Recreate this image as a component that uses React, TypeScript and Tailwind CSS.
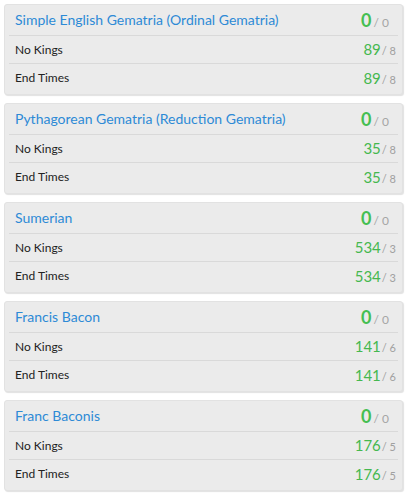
const ciphers = [
  { name: "Simple English Gematria (Ordinal Gematria)", rows: [["No Kings", 89, 8], ["End Times", 89, 8]] },
  { name: "Pythagorean Gematria (Reduction Gematria)", rows: [["No Kings", 35, 8], ["End Times", 35, 8]] },
  { name: "Sumerian", rows: [["No Kings", 534, 3], ["End Times", 534, 3]] },
  { name: "Francis Bacon", rows: [["No Kings", 141, 6], ["End Times", 141, 6]] },
  { name: "Franc Baconis", rows: [["No Kings", 176, 5], ["End Times", 176, 5]] },
] as const;

export default function App() {
  return (
    <div
      className="min-h-screen bg-white pt-1 pl-1 pr-[5px] flex flex-col gap-2"
      style={{ fontFamily: "Lato, 'Open Sans', sans-serif" }}
    >
      {ciphers.map((c) => (
        <div
          key={c.name}
          className="h-[91px] rounded-[3px] bg-[#ebebeb] border border-[#e2e2e2] shadow-[1px_1px_1px_rgba(0,0,0,0.12)] px-1"
        >
          <div className="h-[31px] flex items-center justify-between border-b border-[#d9d9d9] pl-[6px] pr-[9px]">
            <span className="text-[14px] text-[#2d8ad6] leading-none">{c.name}</span>
            <span className="flex items-baseline leading-none">
              <span className="text-[18px] font-bold text-[#45bf52]">0</span>
              <span className="text-[12px] text-[#a5a5a5] ml-[2px]">/ 0</span>
            </span>
          </div>
          {c.rows.map(([label, value, count], i) => (
            <div
              key={label}
              className={
                "h-[28px] flex items-center justify-between pl-[6px] pr-[2px] " +
                (i === 0 ? "border-b border-[#d9d9d9]" : "")
              }
            >
              <span className="text-[12px] text-[#222]">{label}</span>
              <span className="flex items-baseline leading-none">
                <span className="text-[15px] text-[#45b84f]">{value}</span>
                <span className="text-[11px] text-[#a0a0a0] ml-[1px]">/ {count}</span>
              </span>
            </div>
          ))}
        </div>
      ))}
    </div>
  );
}
